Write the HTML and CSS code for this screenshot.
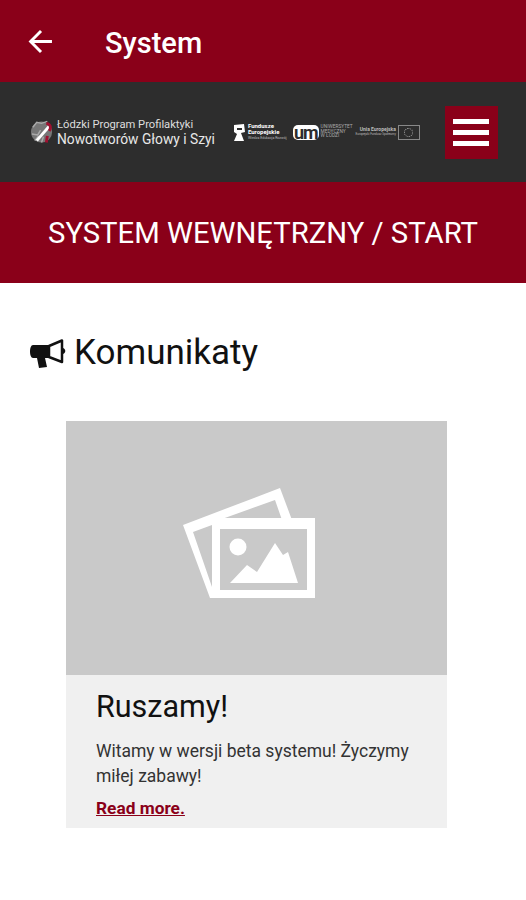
FILE: index.html
```html
<!DOCTYPE html>
<html lang="en">
<head>
    <meta charset="UTF-8">
    <meta name="viewport" content="width=device-width, initial-scale=1.0">
    <title>System</title>
    <link rel="stylesheet" href="styles.css">
</head>
<body>
    <div class="appbar">
        <svg class="back" viewBox="0 0 24 24"><path d="M23 12H3M12.500 2L2.500 12l10 10" fill="none" stroke="#fff" stroke-width="2.800"/></svg>
        <div class="appbar-title">System</div>
    </div>
    <div class="logos">
        <svg class="brain" viewBox="0 0 26 28">
            <circle cx="12" cy="14" r="11" fill="#777"/>
            <path d="M3 9l4-5 5 1 6-2M2 16l6 1 3-5M5 23l4-5M12 25l2-6" stroke="#aaa" stroke-width="1.500" fill="none"/>
            <path d="M7 23L20 8" stroke="#fff" stroke-width="3"/>
            <path d="M17 5c5 1 5 5 3 8M18 18l-1 7" stroke="#a01030" stroke-width="3" fill="none"/>
        </svg>
        <div class="program">
            <div class="program-top">Łódzki Program Profilaktyki</div>
            <div class="program-bottom">Nowotworów Głowy i Szyi</div>
        </div>
        <div class="fe">
            <svg class="fe-mark" viewBox="0 0 13 19"><path d="M1 2l10-1 1 8-4 1 3 8H1l3-7-3-2z" fill="#fff"/><path d="M4 5h5v2H4z" fill="#2d2d2d"/></svg>
            <div class="fe-text">
                <div>Fundusze</div>
                <div>Europejskie</div>
                <div class="tiny">Wiedza Edukacja Rozwój</div>
            </div>
        </div>
        <div class="um">
            <div class="um-mark">um</div>
            <div class="um-text">
                <div>UNIWERSYTET</div>
                <div>MEDYCZNY</div>
                <div>W ŁODZI</div>
            </div>
        </div>
        <div class="eu">
            <div class="eu-text">
                <div>Unia Europejska</div>
                <div class="tiny">Europejski Fundusz Społeczny</div>
            </div>
            <div class="eu-flag"><span class="eu-ring"></span></div>
        </div>
        <div class="menu-btn">
            <span class="menu-line"></span>
            <span class="menu-line"></span>
            <span class="menu-line"></span>
        </div>
    </div>
    <div class="banner">SYSTEM WEWNĘTRZNY / START</div>
    <div class="content">
        <div class="section-title">
            <svg class="horn" viewBox="0 0 36 30">
                <path d="M19 8L32 2.500v21.500L19 19z" fill="#fff" stroke="#111" stroke-width="2.500" stroke-linejoin="round"/>
                <path d="M3 7h16v13h-4l2 9-8 1-2-10H3c-4 0-4-13 0-13z" fill="#111"/>
                <path d="M33 10c3 1 3 5 0 6z" fill="#111"/>
            </svg>
            Komunikaty
        </div>
        <div class="card">
            <div class="card-img">
                <svg class="placeholder" viewBox="0 0 170 135">
                    <path d="M18 50L115 13l12 32H117L110 25 57 44H47v6L28 57l19 55v11H45z" fill="#fff"/>
                    <path d="M47 43H150V123H47z M55 54V115H142V54z" fill="#fff" fill-rule="evenodd"/>
                    <circle cx="73" cy="72" r="8.500" fill="#fff"/>
                    <path d="M65 108L82 90l10 7 18-29 8 12 5-3 10 31z" fill="#fff"/>
                </svg>
            </div>
            <div class="card-body">
                <div class="card-title">Ruszamy!</div>
                <div class="card-text">Witamy w wersji beta systemu! Życzymy miłej zabawy!</div>
                <a class="read-more" href="#">Read more.</a>
            </div>
        </div>
    </div>
</body>
</html>
```

FILE: styles.css
```css
body {
    margin: 0;
    font-family: Roboto, "Liberation Sans", sans-serif;
    background-color: #fff;
    color: #111;
}
.appbar {
    height: 82px;
    background: #8a0019;
    color: white;
    display: flex;
    align-items: center;
    box-sizing: border-box;
    padding-left: 28px;
}
.back {
    width: 25px;
    height: 25px;
}
.appbar-title {
    margin-left: 52px;
    margin-top: 4px;
    font-size: 29px;
    font-weight: 500;
}
.logos {
    height: 100px;
    background: #2d2d2d;
    color: white;
    display: flex;
    align-items: center;
    box-sizing: border-box;
    padding-left: 30px;
}
.brain {
    width: 25px;
    height: 28px;
}
.program {
    margin-left: 2px;
    white-space: nowrap;
}
.program-top {
    font-size: 11.200px;
    line-height: 13px;
    color: #ddd;
}
.program-bottom {
    font-size: 13.800px;
    line-height: 16px;
    color: #e8e8e8;
}
.fe {
    display: flex;
    align-items: center;
    margin-left: 18px;
    width: 53px;
}
.fe-mark {
    width: 13px;
    height: 19px;
    flex-shrink: 0;
}
.fe-text {
    margin-left: 2px;
    font-size: 6px;
    line-height: 6px;
    font-weight: 700;
    white-space: nowrap;
}
.tiny {
    font-size: 3.500px;
    font-weight: 400;
    color: #bbb;
}
.um {
    display: flex;
    align-items: center;
    margin-left: 7px;
    width: 58px;
}
.um-mark {
    font-size: 18px;
    line-height: 16px;
    font-weight: 700;
    letter-spacing: -1px;
    background: white;
    color: #2d2d2d;
    border-radius: 5px;
    padding: 0 1px;
    height: 15px;
}
.um-text {
    margin-left: 2px;
    font-size: 4.800px;
    line-height: 4.500px;
    color: #aaa;
    white-space: nowrap;
}
.eu {
    display: flex;
    align-items: center;
    margin-left: 3px;
    width: 66px;
    white-space: nowrap;
}
.eu-text {
    width: 42px;
    text-align: right;
    font-size: 5px;
    line-height: 5px;
    font-weight: 700;
    color: #bbb;
}
.eu-text .tiny {
    font-size: 3px;
}
.eu-flag {
    width: 20px;
    height: 13px;
    margin-left: 2px;
    border: 1px solid #888;
    display: flex;
    align-items: center;
    justify-content: center;
}
.eu-ring {
    width: 7px;
    height: 7px;
    border: 1px dotted #aaa;
    border-radius: 50%;
}
.menu-btn {
    width: 53px;
    height: 53px;
    margin-left: 25px;
    background: #8a0019;
    display: flex;
    flex-direction: column;
    justify-content: center;
    align-items: center;
    gap: 6px;
}
.menu-line {
    width: 36px;
    height: 5px;
    background: #fff;
}
.banner {
    height: 101px;
    background: #8a0019;
    color: white;
    font-size: 29.250px;
    line-height: 103px;
    text-align: center;
}
.content {
    padding: 49px 0 0 30px;
}
.section-title {
    display: flex;
    align-items: center;
    font-size: 35px;
    line-height: 42px;
}
.horn {
    width: 36px;
    height: 30px;
    margin-right: 8px;
}
.card {
    width: 381px;
    margin: 47px 0 0 36px;
}
.card-img {
    height: 254px;
    background: #c9c9c9;
    display: flex;
    justify-content: flex-start;
}
.placeholder {
    width: 170px;
    height: 135px;
    margin: 54px 0 0 99px;
}
.card-body {
    height: 153px;
    background: #f0f0f0;
    box-sizing: border-box;
    padding: 12px 30px 0;
}
.card-title {
    font-size: 30.500px;
    line-height: 38px;
    margin-top: 1px;
}
.card-text {
    margin-top: 13px;
    font-size: 17.500px;
    line-height: 25px;
    color: #333;
}
.read-more {
    display: block;
    margin-top: 9px;
    font-size: 17.300px;
    font-weight: 700;
    color: #8a0019;
}
```
